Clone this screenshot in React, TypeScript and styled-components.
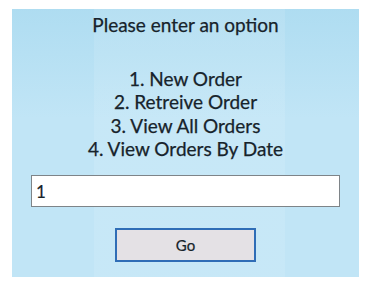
import React from "react";
import styled, { createGlobalStyle } from "styled-components";

const Global = createGlobalStyle`
  html, body { margin: 0; padding: 0; background: #ffffff; }
  body { font-family: "Lato", "Open Sans", "Liberation Sans", sans-serif; }
`;

const Page = styled.div`
  width: 366px;
  height: 285px;
  padding: 9px 7px 8px 12px;
  box-sizing: border-box;
`;

const Panel = styled.div`
  width: 347px;
  height: 268px;
  box-sizing: border-box;
  padding: 4px 0 0 0;
  display: flex;
  flex-direction: column;
  align-items: center;
  background:
    linear-gradient(
      to right,
      rgba(255, 255, 255, 0) 0,
      rgba(255, 255, 255, 0) 82px,
      rgba(255, 255, 255, 0.1) 82px,
      rgba(255, 255, 255, 0.1) 273px,
      rgba(255, 255, 255, 0) 273px
    ),
    linear-gradient(
      to bottom,
      rgba(140, 205, 232, 0.35) 0,
      rgba(140, 205, 232, 0) 110px
    ),
    #c1e5f6;
`;

const Title = styled.div`
  font-size: 19px;
  line-height: 23px;
  color: #17232b;
  -webkit-text-stroke: 0.25px #17232b;
  text-align: center;
`;

const Menu = styled.div`
  margin-top: 31px;
  display: flex;
  flex-direction: column;
  align-items: center;
`;

const MenuItem = styled.div`
  font-size: 19px;
  line-height: 23.3px;
  color: #17232b;
  -webkit-text-stroke: 0.25px #17232b;
  text-align: center;
`;

const Field = styled.input`
  margin-top: 15px;
  width: 309px;
  height: 32px;
  box-sizing: border-box;
  border: 1px solid #7e8488;
  background: #ffffff;
  padding: 0 4px;
  font-family: "Lato", "Open Sans", sans-serif;
  font-size: 17px;
  color: #17232b;
  -webkit-text-stroke: 0.2px #17232b;
  outline: none;
`;

const GoButton = styled.button`
  margin-top: 21px;
  width: 141px;
  height: 34px;
  box-sizing: border-box;
  border: 2px solid #2f6db6;
  background: #e4e1e5;
  font-family: "Lato", "Open Sans", sans-serif;
  font-size: 15px;
  color: #17232b;
  -webkit-text-stroke: 0.2px #17232b;
  cursor: pointer;
`;

export default function App() {
  const options = ["1. New Order", "2. Retreive Order", "3. View All Orders", "4. View Orders By Date"];
  return (
    <>
      <Global />
      <Page>
        <Panel>
          <Title>Please enter an option</Title>
          <Menu>
            {options.map((o) => (
              <MenuItem key={o}>{o}</MenuItem>
            ))}
          </Menu>
          <Field defaultValue="1" />
          <GoButton>Go</GoButton>
        </Panel>
      </Page>
    </>
  );
}
